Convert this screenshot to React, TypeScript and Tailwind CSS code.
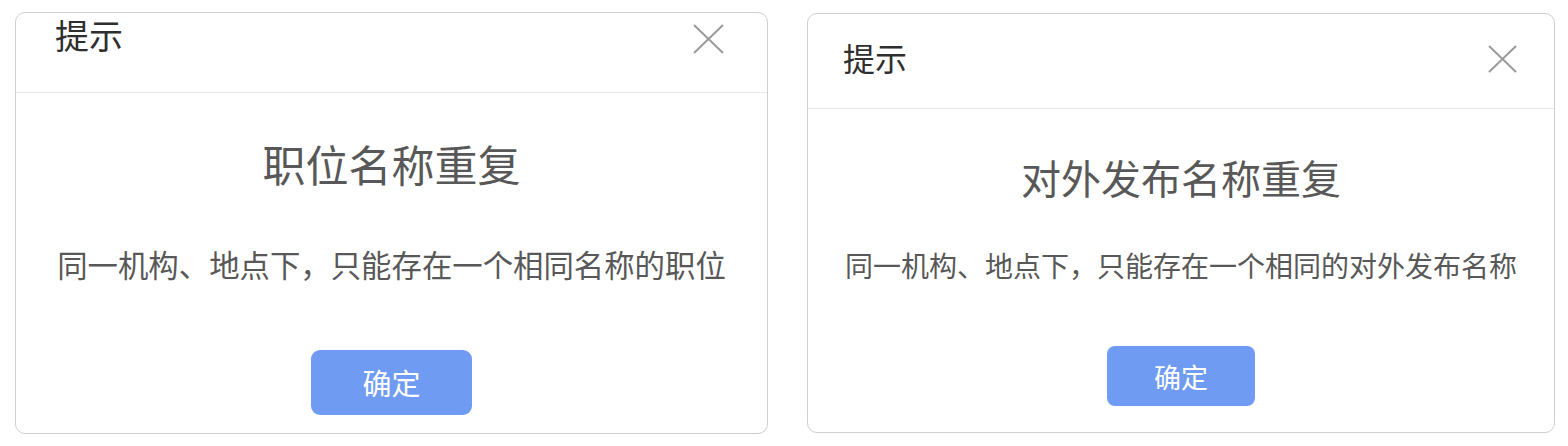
import React from "react";

function CloseIcon({ w, h }: { w: number; h: number }) {
  return (
    <svg width={w} height={h} viewBox={`0 0 ${w} ${h}`} className="shrink-0">
      <line x1={1} y1={1} x2={w - 1} y2={h - 1} stroke="#9a9a9a" strokeWidth={2} />
      <line x1={w - 1} y1={1} x2={1} y2={h - 1} stroke="#9a9a9a" strokeWidth={2} />
    </svg>
  );
}

export default function App() {
  return (
    <div className="w-[1568px] h-[446px] bg-white flex items-start font-['Noto_Sans_CJK_SC',sans-serif]">
      {/* Left dialog */}
      <div className="ml-[15px] mt-[12px] w-[753px] h-[422px] border border-[#cfcfcf] rounded-[10px] flex flex-col bg-white">
        <div className="h-[80px] shrink-0 border-b border-[#e9e9e9] flex items-start justify-between pl-[39px] pr-[43px]">
          <div className="mt-[5px] text-[34px] leading-[34px] text-[#2e2e2e]">提示</div>
          <div className="mt-[11px]">
            <CloseIcon w={31} h={30} />
          </div>
        </div>
        <div className="flex flex-col items-center">
          <div className="mt-[49px] text-[43px] leading-[43px] text-[#585858]">职位名称重复</div>
          <div className="mt-[64px] text-[30.4px] leading-[30px] text-[#585858]">
            同一机构、地点下，只能存在一个相同名称的职位
          </div>
          <button className="mt-[71px] w-[161px] h-[65px] rounded-[9px] bg-[#6f9cf2] text-white text-[29px] leading-[29px] flex items-center justify-center">
            确定
          </button>
        </div>
      </div>

      {/* Right dialog */}
      <div className="ml-[39px] mt-[13px] w-[748px] h-[420px] border border-[#cfcfcf] rounded-[10px] flex flex-col bg-white">
        <div className="h-[95px] shrink-0 border-b border-[#e9e9e9] flex items-start justify-between pl-[35px] pr-[37px]">
          <div className="mt-[27px] text-[32px] leading-[32px] text-[#2e2e2e]">提示</div>
          <div className="mt-[31px]">
            <CloseIcon w={29} h={28} />
          </div>
        </div>
        <div className="flex flex-col items-center">
          <div className="mt-[48px] text-[40px] leading-[40px] text-[#585858]">对外发布名称重复</div>
          <div className="mt-[54px] text-[28px] leading-[28px] text-[#585858]">
            同一机构、地点下，只能存在一个相同的对外发布名称
          </div>
          <button className="mt-[67px] w-[148px] h-[60px] rounded-[8px] bg-[#6f9cf2] text-white text-[27px] leading-[27px] flex items-center justify-center">
            确定
          </button>
        </div>
      </div>
    </div>
  );
}
